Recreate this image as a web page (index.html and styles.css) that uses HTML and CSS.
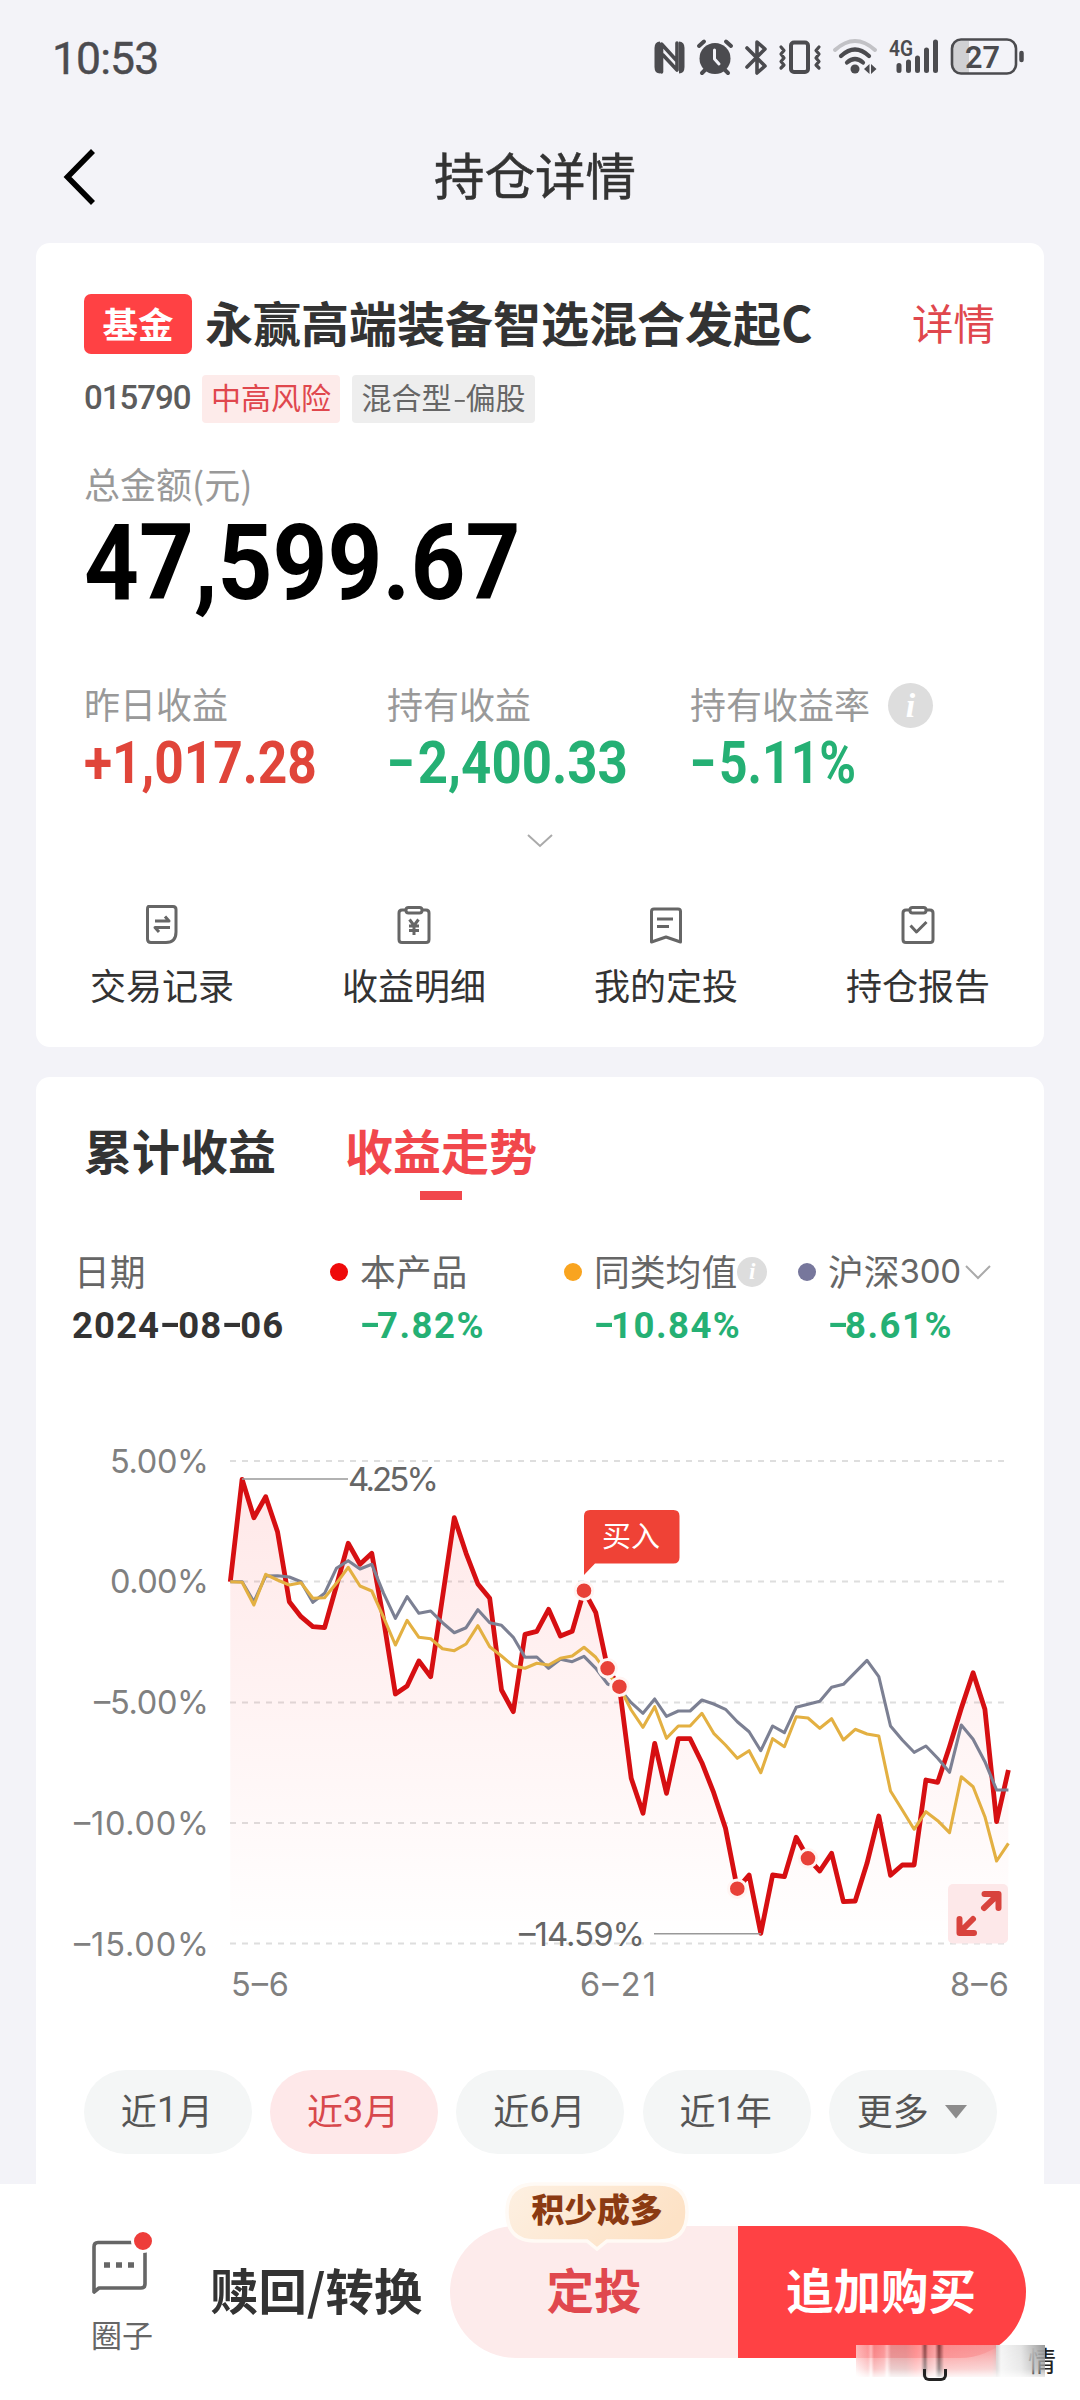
FILE: index.html
```html
<!DOCTYPE html>
<html lang="zh-CN">
<head>
<meta charset="utf-8">
<title>持仓详情</title>
<link rel="stylesheet" href="styles.css">
</head>
<body>
<div class="screen">
  <header class="status">
    <span class="clock">10:53</span>
    <svg class="status-icons" viewBox="640 25 400 70" width="400" height="70" fill="none" stroke="#4b4b4f" stroke-linecap="round" stroke-linejoin="round">
      <path d="M660 41.500 Q654.500 41.500 654.500 48 V67 Q654.500 73.500 660 73.500 Z" fill="#4b4b4f" stroke="none"/>
      <path d="M679 41.500 Q684.500 41.500 684.500 48 V67 Q684.500 73.500 679 73.500 Z" fill="#4b4b4f" stroke="none"/>
      <path d="M661.500 72 V44 L677 61 M663 55 L677 70 V43" stroke-width="3.600"/>
      <g>
        <circle cx="715" cy="58.500" r="15.500" fill="#4b4b4f" stroke="none"/>
        <path d="M699 46 L704 41.500 M731 46 L726 41.500 M705 70 L702 73 M725 70 L728 73" stroke-width="4"/>
        <path d="M714.500 50 V59 L719 64" stroke="#f3f3f8" stroke-width="3"/>
      </g>
      <path d="M747 48 L765 66 L757 73 V42 L765 49 L747 67" stroke-width="3.600"/>
      <rect x="791" y="42.500" width="17" height="29.500" rx="3" stroke-width="4"/>
      <path d="M781 47 L784 50.500 L781 54 L784 58 L781 61.500 L784 65 L781 68 M819 47 L816 50.500 L819 54 L816 58 L819 61.500 L816 65 L819 68" stroke-width="3.200"/>
      <path d="M835 50 Q855 32 875 50" stroke="#c2c2c6" stroke-width="4"/>
      <path d="M841 56 Q855 43 869 56 M847 62.500 Q855 55.500 863 62.500" stroke-width="4.200"/>
      <circle cx="855" cy="69" r="4.500" fill="#4b4b4f" stroke="none"/>
      <path d="M864 69 L869.500 64 V74 Z M876.500 69 L871 64 V74 Z" fill="#4b4b4f" stroke="none"/>
      <path d="M899 65.500 V70.500 M908.500 62 V70.500 M917.500 58 V70.500 M926.500 50 V70.500 M935.500 42 V70.500" stroke-width="5"/>
      <path d="M963 41 H958 Q952.500 41 952.500 48 V66 Q952.500 73 958 73 H969 V41 Z" fill="#d0d0d3" stroke="none"/>
      <rect x="952" y="39.500" width="64" height="34" rx="9" stroke-width="2.600"/>
      <path d="M1021.500 53 V60" stroke-width="4.500"/>
      <text class="net" x="889" y="56" textLength="24" lengthAdjust="spacingAndGlyphs">4G</text>
      <text class="battery" x="965" y="68" textLength="35" lengthAdjust="spacingAndGlyphs">27</text>
    </svg>
  </header>

  <nav class="titlebar">
    <svg class="back" viewBox="0 0 40 60" width="40" height="60"><path d="M33 4 L7.500 30 L33 56" fill="none" stroke="#000" stroke-width="5.600"/></svg>
    <h1>持仓详情</h1>
  </nav>

  <main>
    <section class="card holding">
      <div class="fund">
        <span class="badge">基金</span>
        <h2>永赢高端装备智选混合发起C</h2>
        <a class="detail">详情</a>
      </div>
      <div class="tags">
        <span class="code">015790</span>
        <span class="tag risk">中高风险</span>
        <span class="tag">混合型<i>–</i>偏股</span>
      </div>
      <div class="total-label">总金额(元)</div>
      <div class="total">47,599.67</div>
      <div class="stats">
        <div><div class="label">昨日收益</div><div class="value up">+1,017.28</div></div>
        <div><div class="label">持有收益</div><div class="value down loss"><i>–</i>2,400.33</div></div>
        <div>
          <div class="label">持有收益率<span class="info">i</span></div>
          <div class="value down rate"><i>–</i>5.11%</div>
        </div>
      </div>
      <div class="expand"><svg viewBox="0 0 28 16" width="28" height="16"><path d="M2 2 L14 13 L26 2" fill="none" stroke="#aaa" stroke-width="2"/></svg></div>
      <div class="menu">
        <a><svg viewBox="0 0 40 40" width="40" height="40"><path d="M6.500 1.500 H31 Q34 1.500 34 4.500 V27 Q34 37.500 24 37.500 H9 Q5.500 37.500 5.500 34 V4.500 Q5.500 1.500 6.500 1.500 Z"/><path d="M13 16 H27 L23 11.500 M28 22.500 H13 L17 27"/></svg><span>交易记录</span></a>
        <a><svg viewBox="0 0 40 40" width="40" height="40"><path d="M12 5 H8 Q5 5 5 8 V34.500 Q5 37.500 8 37.500 H32 Q35 37.500 35 34.500 V8 Q35 5 32 5 H28"/><rect x="12" y="2.500" width="16" height="5.500" rx="2.500"/><path d="M15.500 14.500 L20 20.500 L24.500 14.500 M20 20.500 V30 M15 21 H25 M15 25.500 H25"/></svg><span>收益明细</span></a>
        <a><svg viewBox="0 0 40 40" width="40" height="40"><path d="M5.500 37 V6.500 Q5.500 4 8 4 H32 Q34.500 4 34.500 6.500 V37 L20 32 Z"/><path d="M11 14 H27 M11 21.500 H23"/></svg><span>我的定投</span></a>
        <a><svg viewBox="0 0 40 40" width="40" height="40"><path d="M12 5 H8 Q5 5 5 8 V34.500 Q5 37.500 8 37.500 H32 Q35 37.500 35 34.500 V8 Q35 5 32 5 H28"/><rect x="12" y="2.500" width="16" height="5.500" rx="2.500"/><path d="M12.500 20.500 L18.500 27 L28.500 17"/></svg><span>持仓报告</span></a>
      </div>
    </section>

    <section class="card trend">
      <div class="tabs">
        <a>累计收益</a>
        <a class="active">收益走势</a>
      </div>
      <div class="legend">
        <div><div class="name">日期</div><div class="num date">2024<i>–</i>08<i>–</i>06</div></div>
        <div class="series"><div class="name"><b class="dot fundline"></b>本产品</div><div class="num"><i>–</i>7.82%</div></div>
        <div class="series"><div class="name"><b class="dot peer"></b>同类均值<span class="info small">i</span></div><div class="num"><i>–</i>10.84%</div></div>
        <div class="series"><div class="name"><b class="dot index"></b>沪深<em>300</em><svg viewBox="0 0 28 18" width="28" height="18"><path d="M2 3 L14 15 L26 3" fill="none" stroke="#aaa" stroke-width="2"/></svg></div><div class="num"><i>–</i>8.61%</div></div>
      </div>

      <svg class="chart" viewBox="36 1420 1008 600" width="1008" height="600">
        <defs>
          <linearGradient id="fade" gradientUnits="userSpaceOnUse" x1="0" y1="1479" x2="0" y2="1944">
            <stop offset="0" stop-color="#ff3c3c" stop-opacity=".12"/>
            <stop offset=".45" stop-color="#ff3c3c" stop-opacity=".065"/>
            <stop offset="1" stop-color="#ff3c3c" stop-opacity="0"/>
          </linearGradient>
        </defs>
        <g class="grid">
          <path d="M230 1461 H1006 M230 1581.500 H1006 M230 1702.500 H1006 M230 1823 H1006 M230 1943.500 H1006"/>
        </g>
        <g class="axis">
          <text x="110" y="1472.500" textLength="99">5.00%</text>
          <text x="110" y="1593" textLength="99">0.00%</text>
          <text x="94" y="1714" textLength="115">–5.00%</text>
          <text x="74" y="1835" textLength="135">–10.00%</text>
          <text x="74" y="1955.500" textLength="135">–15.00%</text>
          <text x="231" y="1995.500" textLength="58">5–6</text>
          <text x="580" y="1995.500" textLength="76">6–21</text>
          <text x="950" y="1995.500" textLength="59">8–6</text>
        </g>
        <g id="plot"></g>
        <g class="callout">
          <path d="M242 1479 H348 M654 1933.700 H761"/>
          <text x="348" y="1491" textLength="91">4.25%</text>
          <text x="519" y="1945.500" textLength="126">–14.59%</text>
        </g>
        <g class="buy">
          <path d="M584 1575 V1516 Q584 1510 590 1510 H673.500 Q679.500 1510 679.500 1516 V1557.500 Q679.500 1563.500 673.500 1563.500 H595 Z"/>
          <text x="602" y="1547">买入</text>
        </g>
        <g class="zoom">
          <rect x="948" y="1884" width="60" height="59.500" rx="5"/>
          <path d="M984 1908 L998 1894.500 M984.500 1894 H998.500 V1908 M973 1919 L960 1932 M974 1933 H959.500 V1919"/>
        </g>
      </svg>

      <div class="ranges">
        <a>近<em>1</em>月</a>
        <a class="active">近<em>3</em>月</a>
        <a>近<em>6</em>月</a>
        <a>近<em>1</em>年</a>
        <a class="more">更多<svg viewBox="0 0 22 14" width="22" height="14"><path d="M0 0 H22 L11 13.500 Z" fill="#8c8c8c"/></svg></a>
      </div>
    </section>
  </main>

  <footer class="actions">
    <a class="circle">
      <svg viewBox="90 2228 66 70" width="66" height="70">
        <path d="M95 2292 V2247 Q95 2242.500 99 2242.500 H142 Q146 2242.500 146 2247 V2284 Q146 2288 142 2288 H100 Z" fill="none" stroke="#666" stroke-width="3.600" stroke-linejoin="round"/>
        <path d="M105 2265 H111 M117 2265 H123 M129 2265 H135" stroke="#666" stroke-width="5.500"/>
        <circle cx="144" cy="2241" r="10.500" fill="#ee3d3a" stroke="#fff" stroke-width="3"/>
      </svg>
      <span>圈子</span>
    </a>
    <a class="redeem">赎回/转换</a>
    <div class="pill">
      <a class="auto">定投
        <span class="tip">
          <svg viewBox="0 0 186 72" width="186" height="72">
            <defs><linearGradient id="cream" x1="0" x2="1" y1="0" y2=".3"><stop offset="0" stop-color="#fdf0e2"/><stop offset="1" stop-color="#fde2c6"/></linearGradient></defs>
            <path d="M31 3 H155 Q183 3 183 31 Q183 60 155 60 H103 L93 68 L83 60 H31 Q3 60 3 31 Q3 3 31 3 Z" fill="url(#cream)" stroke="#fffaf5" stroke-width="3.500"/>
          </svg>
          <b>积少成多</b>
        </span>
      </a>
      <a class="buy-more">追加购买</a>
    </div>
    <div class="smear"><span>情</span></div>
  </footer>
</div>
<script src="chart.js"></script>
</body>
</html>
```
FILE: styles.css
```css
* { box-sizing: border-box; }
body {
  margin: 0;
  background: #f3f3f8;
  color: #333;
  font-family: "Noto Sans CJK SC", sans-serif;
}
h1, h2 { margin: 0; }
i, em { font-style: normal; }
.screen { width: 1080px; height: 2400px; overflow: hidden; display: flex; flex-direction: column; }

/* status bar */
.status { height: 120px; display: flex; justify-content: space-between; padding: 25px 40px 0 52px; }
.clock { font: 400 44.500px/68px Roboto, sans-serif; color: #4b4b4f; letter-spacing: -.9px; -webkit-text-stroke: .4px #4b4b4f; }
.net { font: 600 22px Roboto, sans-serif; fill: #4b4b4f; stroke: none; }
.battery { font: 600 32px Roboto, sans-serif; fill: #4b4b4f; stroke: none; }

/* title */
.titlebar { height: 123px; display: grid; grid-template-columns: 120px 1fr 120px; align-items: center; padding-bottom: 18px; }
.back { margin-left: 60px; margin-top: 8px; }
.titlebar h1 { text-align: center; font-size: 50.500px; line-height: 60px; font-weight: 400; margin-right: 10px; -webkit-text-stroke: .5px #333; }

/* cards */
main { padding: 0 36px; height: 1941px; flex: none; }
.card { background: #fff; border-radius: 14px; }
.holding { height: 804px; padding: 51px 0 0 48px; }
.fund { display: flex; height: 60px; align-items: center; line-height: 54px; }
.badge { width: 108px; height: 60px; border-radius: 7px; background: #ff4144; color: #fff; font-size: 35.500px; font-weight: 700; text-align: center; line-height: 57px; }
.fund h2 { margin-left: 13px; font-size: 48px; font-weight: 700; white-space: nowrap; width: 707px; position: relative; top: -3px; }
.detail { font-size: 41.500px; color: #e0474d; position: relative; top: -2px; }
.tags { display: flex; margin-top: 21px; height: 48px; line-height: 43px; }
.code { width: 118px; font: 500 33px/45px Roboto, sans-serif; color: #5c5c5c; letter-spacing: -1px; }
.tag { height: 48px; padding: 0 9.500px; margin-right: 12px; border-radius: 4px; background: #eee; color: #666; font-size: 30px; }
.tag i { display: inline-block; width: 14px; text-align: center; transform: scaleX(.75); }
.tag.risk { background: #fdebea; color: #e0474d; padding: 0 9px; }
.total-label { margin-top: 36px; height: 54px; line-height: 49px; font-size: 36px; color: #999; }
.total { height: 96px; font: 700 105px/102px Roboto, sans-serif; color: #000; transform: scaleX(.913); transform-origin: left; }
.stats { display: grid; grid-template-columns: 303px 303px 1fr; margin-top: 69px; }
.label { display: flex; align-items: center; height: 54px; line-height: 50px; font-size: 36px; color: #999; padding-bottom: 4px; }
.info { width: 45px; height: 45px; border-radius: 50%; background: #ddd; color: #fff; font: italic 700 34px/45px "Liberation Serif", serif; text-align: center; margin-left: 18px; position: relative; top: 2px; }
.value { height: 60px; font: 700 60px/62px Roboto, sans-serif; white-space: nowrap; transform: scaleX(.858); transform-origin: left; }
.value i { display: inline-block; width: 35px; transform: scaleX(.8); transform-origin: left; }
.loss { transform: scaleX(.88); }
.rate { transform: scaleX(.83); }
.up { color: #e0453a; }
.down { color: #25b074; }
.expand { height: 98px; display: flex; align-items: center; justify-content: center; margin-left: -48px; }
.menu { display: grid; grid-template-columns: repeat(4, 252px); margin: 15px 0 0 -48px; }
.menu a { display: flex; flex-direction: column; align-items: center; }
.menu svg { fill: none; stroke: #666; stroke-width: 3; stroke-linejoin: round; }
.menu span { margin-top: 15px; font-size: 36px; line-height: 48px; }

.trend { height: 1107px; margin-top: 30px; border-radius: 14px 14px 0 0; }
.tabs { height: 150px; display: flex; gap: 69px; padding-left: 48px; line-height: 145px; font-size: 48px; font-weight: 700; }
.tabs a { position: relative; }
.tabs .active { color: #f1474c; }
.tabs .active::after { content: ""; position: absolute; left: 75px; top: 114px; width: 42px; height: 9px; background: #f1474c; }
.legend { display: grid; grid-template-columns: 256px 234px 234px 1fr; margin-top: 18px; padding-left: 38px; }
.name { display: flex; align-items: center; height: 54px; padding-bottom: 4px; font-size: 35.800px; color: #666; white-space: nowrap; }
.dot { width: 18px; height: 18px; border-radius: 50%; margin-right: 12px; position: relative; top: 2px; }
.fundline { background: #ef0a0a; }
.peer { background: #f9a41f; }
.index { background: #77779c; }
.name svg { margin-left: 3px; position: relative; top: 2px; }
.name em { font-family: Inter, sans-serif; font-size: 33px; letter-spacing: -.3px; position: relative; top: 1px; }
.info.small { width: 30px; height: 30px; font-size: 23px; line-height: 30px; margin-left: 0; }
.num { height: 50px; font: 700 36.500px/53px Roboto, sans-serif; color: #25b074; white-space: nowrap; letter-spacing: 1.500px; }
.num i { display: inline-block; width: 17px; transform: scaleX(.85); transform-origin: left; }
.series .num { padding-left: 30px; }
.num.date { color: #333; letter-spacing: 1.100px; margin-left: -2px; }
.date i { width: 18px; }

/* chart */
.chart { display: block; margin-top: 71px; }
.grid path { stroke: #dedede; stroke-width: 2; stroke-dasharray: 6 6; fill: none; }
.axis text { font: 400 32.500px Inter, sans-serif; fill: #808080; }
.callout text { font: 400 33px Inter, sans-serif; fill: #666; }
.callout path { stroke: #999; stroke-width: 1.500; }
.buy path { fill: #ef4236; }
.buy text { font-size: 29px; fill: #fff; }
.zoom rect { fill: #fde8e9; }
.zoom path { fill: none; stroke: #d8433d; stroke-width: 6; stroke-linecap: round; stroke-linejoin: round; }
.area { fill: url(#fade); }
.line { fill: none; stroke-linejoin: round; }
.line.own { stroke: #d60f12; stroke-width: 4.800; }
.line.peers { stroke: #e3b042; stroke-width: 3.100; }
.line.csi { stroke: #7c8093; stroke-width: 3.100; }
.trade { fill: #e84138; stroke: #fff5f3; stroke-width: 3; }

.ranges { display: grid; grid-template-columns: repeat(5, 168px); gap: 18.200px; margin-top: 50px; padding-left: 48px; }
.ranges a { display: flex; align-items: center; justify-content: center; height: 84px; padding: 0 2px 7px 0; border-radius: 42px; background: #f4f6f6; color: #555; font-size: 36px; }
.ranges em { font-family: Roboto, sans-serif; position: relative; top: 1px; }
.ranges .active { background: #fee8e9; color: #d8484c; }
.ranges .more svg { margin: 6px 0 0 16px; }

/* bottom bar */
.actions { height: 216px; flex: none; background: #fff; display: flex; position: relative; }
.circle { width: 66px; margin: 44px 0 0 89px; display: flex; flex-direction: column; align-items: center; font-size: 31px; line-height: 40px; color: #666; }
.circle span { margin-top: 16px; }
.redeem { margin-left: 55px; width: 240px; margin-top: 73px; font-size: 48.400px; line-height: 64px; font-weight: 700; white-space: nowrap; }
.pill { display: flex; margin-top: 42px; width: 576px; height: 132px; font-size: 47.500px; font-weight: 700; line-height: 126px; text-align: center; }
.auto { position: relative; width: 288px; background: #fdebeb; color: #e0484e; border-radius: 66px 0 0 66px; }
.buy-more { width: 288px; padding-right: 2px; background: #ff4144; color: #fff; border-radius: 0 66px 66px 0; }
.tip { position: absolute; left: 54px; top: -45px; width: 186px; height: 72px; }
.tip svg { position: absolute; left: 0; top: 0; }
.tip b { position: absolute; left: 0; top: 0; width: 186px; font-size: 32.800px; line-height: 54px; color: #8b3a12; }
.smear { position: absolute; left: 856px; top: 161px; width: 200px; height: 32px; text-align: right; }
.smear span { font-size: 28px; line-height: 31px; color: #222; }
.smear::before {
  content: ""; position: absolute; inset: 0 11px 0 0;
  background:
    linear-gradient(#ff414466, #fff4),
    linear-gradient(90deg, #fff 0, #f9c9ca 12px, #fff 15px, #f3a9aa 18px, #f9c4c5 28px, #fff 31px, #d8b8b8 35px, #d9b5b5 50px, #fbb 60px, #fcc 65px, #444 69px, #e8b9b9 72px, #fadada 79px, #333 83px, #f8bcbc 88px, #f7c2c2 110px, #f3c9c9 136px, #d5cfcf 141px, #f4f4f4 145px, #e3e3e3 165px, #999 189px);
  background-size: 140px 100%, 100% 100%;
  background-repeat: no-repeat;
  -webkit-mask-image: linear-gradient(#000, #000b 75%, #0003);
  mask-image: linear-gradient(#000, #000b 75%, #0003);
}
.smear::after {
  content: ""; position: absolute; left: 67px; top: 24px; width: 18px; height: 9px;
  border: solid #222; border-width: 0 3px 3px; border-radius: 0 0 6px 6px;
}
```
FILE: chart.js
```js
// Levels sampled once per trading day. 0% sits at 485 and 5% spans 362 units.
const own = [485,178,293,230,335,545,590,620,623,498,370,433,400,600,822,798,723,770,532,293,400,492,535,810,875,643,634,568,648,634,512,578,745,800,1075,1180,970,1120,956,956,1028,1118,1225,1406,1365,1540,1365,1370,1252,1315,1353,1300,1445,1443,1330,1188,1366,1335,1335,1080,1087,980,865,758,868,1205,1050];
const csi = [485,485,545,468,467,471,485,547,520,445,422,447,433,520,595,530,580,573,608,638,623,569,608,616,652,712,711,745,718,725,709,745,792,806,848,880,837,889,873,873,840,852,868,905,935,992,918,938,862,853,844,802,793,757,721,770,918,960,997,978,1015,1057,915,958,1025,1110,1110];
const peers = [485,487,555,463,480,495,488,535,533,490,442,498,513,592,675,601,652,656,686,692,672,617,680,708,738,745,730,735,715,708,682,712,760,800,870,922,860,955,918,918,880,940,975,1015,992,1058,956,980,890,894,925,896,960,928,942,948,1113,1170,1228,1175,1202,1238,1070,1100,1190,1323,1270];
const trades = [30, 32, 33, 43, 49];

const px = i => 230.3 + i * 11.79;
const py = v => 1420 + v / 3;
const path = a => a.map((v, i) => (i ? 'L' : 'M') + px(i).toFixed(1) + ' ' + py(v).toFixed(1)).join(' ');

document.getElementById('plot').innerHTML =
  `<path class="area" d="${path(own)} V1943.5 H230.3 Z"/>` +
  `<path class="line own" d="${path(own)}"/>` +
  `<path class="line csi" d="${path(csi)}"/>` +
  `<path class="line peers" d="${path(peers)}"/>` +
  trades.map(i => `<circle class="trade" cx="${px(i).toFixed(1)}" cy="${py(own[i]).toFixed(1)}" r="8.8"/>`).join('');
```
